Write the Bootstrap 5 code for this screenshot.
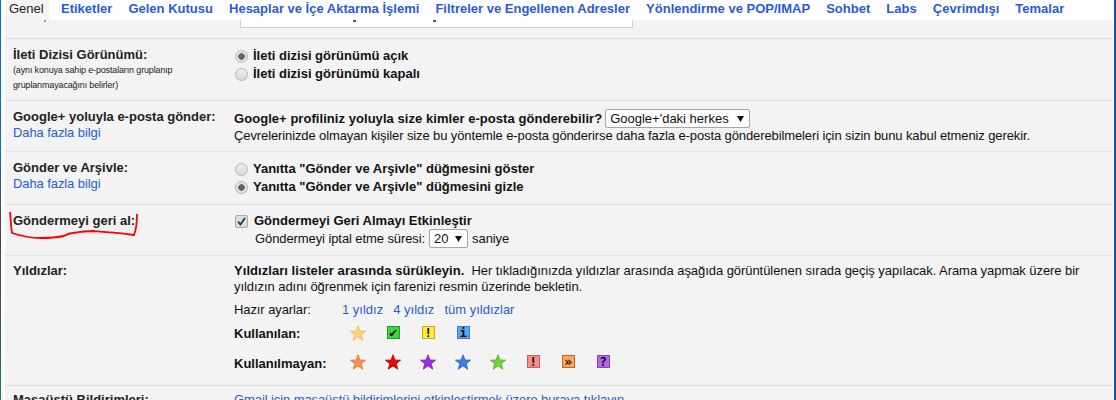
<!DOCTYPE html>
<html lang="tr">
<head>
  <meta charset="UTF-8" />
  <title>Ayarlar</title>
  <link href="https://cdn.jsdelivr.net/npm/bootstrap@5.3.0/dist/css/bootstrap.min.css" rel="stylesheet" />
  <style>
    html, body { height: 400px; overflow: hidden; }
    body {
      background: #fff;
      font-family: "Liberation Sans", Arial, sans-serif;
      font-size: 13px;
      line-height: 16px;
      color: #111;
      letter-spacing: -0.09px;
    }
    a { color: #2a5bd7; text-decoration: none; }

    .mail-frame {
      height: 400px;
      margin: 0 1px;
      padding: 0 2px 0 4px;
      position: relative;
    }
    .mail-frame::before, .mail-frame::after {
      content: "";
      position: absolute;
      top: 0;
      bottom: 0;
      width: 1px;
    }
    .mail-frame::before { left: -1px; background: linear-gradient(#0f6fb5 0, #0f6fb5 40%, #5a3a2a 60%, #14806a 100%); }
    .mail-frame::after { right: -1px; width: 2px; background: #174ea6; }

    .tab-strip { height: 20px; }
    .tab-item { font-weight: 700; line-height: 18px; white-space: nowrap; letter-spacing: 0; }
    .tab-item.is-current { width: 44px; padding-left: 4px; background: #f3f3f3; color: #222; font-weight: 400; }
    .tab-links { padding-left: 12px; gap: 16.1px; }

    .settings-panel { background: #f3f3f3; height: 380px; padding-right: 1px; }
    .setting-row { padding-left: 8px; border-bottom: 1px solid #e2e2e2; }
    .setting-row:last-child { border-bottom: 0; }
    .row-clip { height: 19px; overflow: hidden; }
    .row-thread { height: 62px; padding-top: 8px; }
    .row-plus { height: 51px; padding-top: 8px; }
    .row-archive { height: 53px; padding-top: 8px; }
    .row-undo { height: 51px; padding-top: 8px; }
    .row-stars { height: 130px; padding-top: 7px; }
    .row-desktop { height: 20px; padding-top: 6px; }

    .setting-name { width: 221px; flex: none; }
    .setting-body { flex: 1; min-width: 0; }
    .name-strong { font-weight: 700; color: #222; letter-spacing: 0; }
    .name-note { font-size: 9px; line-height: 15px; color: #222; display: block; letter-spacing: -0.15px; }
    .strong-text { font-weight: 700; letter-spacing: 0; }
    .strong-wide { letter-spacing: 0.05px; }
    .tight-line { letter-spacing: -0.11px; }
    .loose-line { letter-spacing: -0.06px; }

    .sig-box {
      width: 393px;
      height: 8px;
      margin-left: 6px;
      padding-left: 112px;
      gap: 77px;
      background: #fff;
      border: 1px solid #d0d0d0;
      border-top: 0;
    }
    /* descender ends of the scrolled-away line */
    .clip-speck { width: 3px; height: 2px; background: #555; }
    .clip-left { display: block; margin-left: 31px; width: 2px; background: #999; }

    .radio-line { height: 18px; gap: 5px; font-weight: 700; letter-spacing: 0; }
    .radio-dot {
      width: 13px;
      height: 13px;
      flex: none;
      margin-left: 1px;
      border-radius: 50%;
      border: 1px solid #b5b5b5;
      background: linear-gradient(#eee, #d8d8d8);
    }
    .radio-dot.is-on { background: radial-gradient(circle, #666 0, #666 3px, #e2e2e2 3.5px); }
    .check-box {
      width: 13px;
      height: 13px;
      flex: none;
      margin-left: 1px;
      margin-right: 6px;
      border: 1px solid #aaa;
      border-radius: 2px;
      background: #ddd;
      display: flex;
      align-items: center;
      justify-content: center;
    }
    .timer-line { padding-left: 21px; }

    .pick-box {
      appearance: none;
      height: 19px;
      padding: 0 16px 0 4px;
      font: 13px "Liberation Sans", Arial, sans-serif;
      line-height: 16px;
      color: #111;
      background: #fff url("data:image/svg+xml,%3Csvg xmlns='http://www.w3.org/2000/svg' width='7' height='6'%3E%3Cpath d='M0 0h7L3.5 6z' fill='%23111'/%3E%3C/svg%3E") no-repeat right 5px center;
      border: 1px solid #a6a6a6;
      border-radius: 2px;
    }
    .pick-wide { width: 145px; margin-left: 3px; }
    .pick-small { width: 39px; margin: 0 4px 0 4px; }

    .star-grid { margin-top: 7px; }
    .preset-line { height: 17px; }
    .preset-line .grid-label { width: 108px; }
    .preset-line a { margin-right: 10px; letter-spacing: 0; }
    .star-line { align-items: center; }
    .grid-label { flex: none; width: 106.5px; }
    .star-line.used { height: 22px; margin-top: 4px; }
    .star-line.spare { height: 24px; margin-top: 7px; }
    .star-cell { width: 35px; flex: none; display: flex; justify-content: center; padding-bottom: 3px; }
    .star-line.spare .star-cell { padding-bottom: 5px; }
    .mark-box {
      width: 13px;
      height: 13px;
      font: 700 13px/11px "DejaVu Sans Mono", monospace;
      text-align: center;
      color: #111;
      border: 1px solid;
    }
    .mark-green { background: #3ed63e; border-color: #1f9d1f; }
    .mark-yellow { background: #ffe93b; border-color: #c9a91a; }
    .mark-blue { background: #5aa5f5; border-color: #3b7fd0; }
    .mark-red { background: #f98b8b; border-color: #d45c5c; }
    .mark-orange { background: #fba55e; border-color: #d9601c; }
    .mark-purple { background: #b468ea; border-color: #8a3fcb; }

    .red-scribble { position: absolute; left: 0; top: 200px; pointer-events: none; }
  </style>
</head>
<body>
  <svg width="0" height="0" class="d-block">
    <defs>
      <polygon id="starShape" points="8,0.8 10,6 15.6,6.2 11.2,9.7 12.8,15.2 8,12 3.2,15.2 4.8,9.7 0.4,6.2 6,6" />
    </defs>
  </svg>

  <div class="mail-frame">
    <div class="tab-strip d-flex">
      <div class="tab-item is-current">Genel</div>
      <div class="tab-links d-flex">
        <a class="tab-item" href="#">Etiketler</a>
        <a class="tab-item" href="#">Gelen Kutusu</a>
        <a class="tab-item" href="#">Hesaplar ve İçe Aktarma İşlemi</a>
        <a class="tab-item" href="#">Filtreler ve Engellenen Adresler</a>
        <a class="tab-item" href="#">Yönlendirme ve POP/IMAP</a>
        <a class="tab-item" href="#">Sohbet</a>
        <a class="tab-item" href="#">Labs</a>
        <a class="tab-item" href="#">Çevrimdışı</a>
        <a class="tab-item" href="#">Temalar</a>
      </div>
    </div>

    <div class="settings-panel">
      <div class="setting-row row-clip d-flex">
        <div class="setting-name"><span class="clip-speck clip-left"></span></div>
        <div class="sig-box d-flex"><span class="clip-speck"></span><span class="clip-speck"></span></div>
      </div>

      <div class="setting-row row-thread d-flex">
        <div class="setting-name">
          <span class="name-strong">İleti Dizisi Görünümü:</span>
          <span class="name-note">(aynı konuya sahip e-postaların gruplanıp<br />gruplanmayacağını belirler)</span>
        </div>
        <div class="setting-body">
          <div class="radio-line d-flex align-items-center"><span class="radio-dot is-on"></span>İleti dizisi görünümü açık</div>
          <div class="radio-line d-flex align-items-center"><span class="radio-dot"></span>İleti dizisi görünümü kapalı</div>
        </div>
      </div>

      <div class="setting-row row-plus d-flex">
        <div class="setting-name">
          <span class="name-strong">Google+ yoluyla e-posta gönder:</span><br />
          <a href="#">Daha fazla bilgi</a>
        </div>
        <div class="setting-body">
          <div class="d-flex align-items-center">
            <span class="strong-text strong-wide">Google+ profiliniz yoluyla size kimler e-posta gönderebilir?</span>
            <select class="pick-box pick-wide"><option>Google+'daki herkes</option></select>
          </div>
          <div class="tight-line">Çevrelerinizde olmayan kişiler size bu yöntemle e-posta gönderirse daha fazla e-posta gönderebilmeleri için sizin bunu kabul etmeniz gerekir.</div>
        </div>
      </div>

      <div class="setting-row row-archive d-flex">
        <div class="setting-name">
          <span class="name-strong">Gönder ve Arşivle:</span><br />
          <a href="#">Daha fazla bilgi</a>
        </div>
        <div class="setting-body">
          <div class="radio-line d-flex align-items-center"><span class="radio-dot"></span>Yanıtta "Gönder ve Arşivle" düğmesini göster</div>
          <div class="radio-line d-flex align-items-center"><span class="radio-dot is-on"></span>Yanıtta "Gönder ve Arşivle" düğmesini gizle</div>
        </div>
      </div>

      <div class="setting-row row-undo d-flex">
        <div class="setting-name"><span class="name-strong">Göndermeyi geri al:</span></div>
        <div class="setting-body">
          <div class="d-flex align-items-center strong-text">
            <span class="check-box">
              <svg width="9" height="9" viewBox="0 0 9 9"><path d="M1 4.5l2.4 3L8 1" fill="none" stroke="#333" stroke-width="1.8" /></svg>
            </span>Göndermeyi Geri Almayı Etkinleştir
          </div>
          <div class="timer-line d-flex align-items-center">
            <span>Göndermeyi iptal etme süresi:</span>
            <select class="pick-box pick-small"><option>20</option></select>
            <span>saniye</span>
          </div>
        </div>
      </div>

      <div class="setting-row row-stars d-flex">
        <div class="setting-name"><span class="name-strong">Yıldızlar:</span></div>
        <div class="setting-body">
          <div class="loose-line"><span class="strong-text strong-wide">Yıldızları listeler arasında sürükleyin.</span>&nbsp; Her tıkladığınızda yıldızlar arasında aşağıda görüntülenen sırada geçiş yapılacak. Arama yapmak üzere bir<br />yıldızın adını öğrenmek için farenizi resmin üzerinde bekletin.</div>
          <div class="star-grid">
            <div class="preset-line d-flex">
              <span class="grid-label">Hazır ayarlar:</span>
              <a href="#">1 yıldız</a><a href="#">4 yıldız</a><a href="#">tüm yıldızlar</a>
            </div>
            <div id="usedStars" class="star-line used d-flex"><span class="grid-label strong-text">Kullanılan:</span></div>
            <div id="spareStars" class="star-line spare d-flex"><span class="grid-label strong-text">Kullanılmayan:</span></div>
          </div>
        </div>
      </div>

      <div class="setting-row row-desktop d-flex">
        <div class="setting-name"><span class="name-strong">Masaüstü Bildirimleri:</span></div>
        <div class="setting-body"><a href="#">Gmail için masaüstü bildirimlerini etkinleştirmek üzere buraya tıklayın.</a></div>
      </div>
    </div>

    <svg class="red-scribble" width="150" height="50" viewBox="0 200 150 50">
      <path d="M9 212C10 220 10 228 11 233C20 236 30 238 40 238C50 238 58 237 63 236C66 234 68 233 72 233C78 232 84 231 92 231C105 232 120 233 133 235C135 230 136 222 136 214" fill="none" stroke="#f00" stroke-width="1.8" />
    </svg>
  </div>

  <script src="https://cdn.jsdelivr.net/npm/bootstrap@5.3.0/dist/js/bootstrap.bundle.min.js"></script>
  <script>
    // star rows: s = star with fill/stroke, m = square mark with glyph
    const used = [
      ['s', '#fdd47a', '#e8b95a'], ['m', 'mark-green', '✔'], ['m', 'mark-yellow', '!'], ['m', 'mark-blue', 'i']
    ];
    const spare = [
      ['s', '#fb9150', '#e0762f'], ['s', '#f00000', '#b00000'], ['s', '#a52be0', '#7f1fb0'],
      ['s', '#3c7ee0', '#2c5fb0'], ['s', '#72d23c', '#55a82a'],
      ['m', 'mark-red', '!'], ['m', 'mark-orange', '»'], ['m', 'mark-purple', '?']
    ];

    function fillRow(id, items) {
      const row = document.getElementById(id);
      items.forEach(item => {
        const cell = document.createElement('span');
        cell.className = 'star-cell';
        if (item[0] === 's') {
          cell.innerHTML = `<svg width="16" height="16" viewBox="0 0 16 16"><use href="#starShape" fill="${item[1]}" stroke="${item[2]}" stroke-width="0.8" /></svg>`;
        } else {
          cell.innerHTML = `<span class="mark-box ${item[1]}">${item[2]}</span>`;
        }
        row.appendChild(cell);
      });
    }

    fillRow('usedStars', used);
    fillRow('spareStars', spare);
  </script>
</body>
</html>
